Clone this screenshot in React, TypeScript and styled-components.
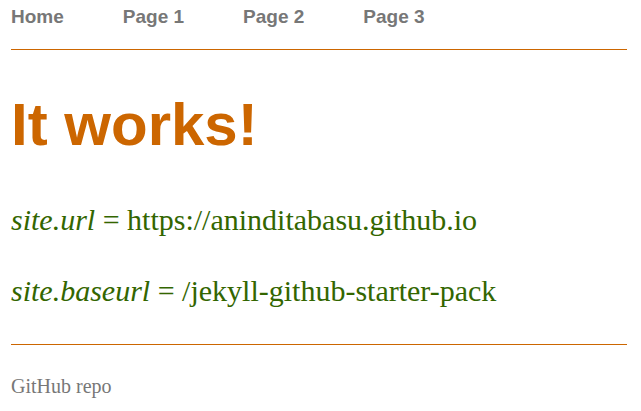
import React from 'react';
import styled, { createGlobalStyle } from 'styled-components';

const GlobalStyle = createGlobalStyle`
  html, body {
    margin: 0;
    padding: 0;
    background: #ffffff;
  }
`;

const Page = styled.div`
  padding: 0 14px 0 11px;
  font-family: 'Liberation Serif', 'Times New Roman', serif;
`;

const Nav = styled.nav`
  display: flex;
  gap: 59px;
  padding-top: 5px;
  height: 44px;
  border-bottom: 1px solid #cc6600;
`;

const NavLink = styled.a`
  font-family: 'Liberation Sans', Arial, sans-serif;
  font-weight: bold;
  font-size: 19px;
  line-height: 24px;
  color: #777777;
  text-decoration: none;
`;

const Title = styled.h1`
  font-family: 'Liberation Sans', Arial, sans-serif;
  font-weight: bold;
  font-size: 60px;
  line-height: 70px;
  color: #cc6600;
  margin: 40px 0 43px 0;
`;

const Line = styled.p`
  font-size: 30px;
  line-height: 34px;
  color: #336600;
  margin: 0 0 37px 0;

  &:last-of-type {
    margin-bottom: 36px;
  }
`;

const Footer = styled.footer`
  border-top: 1px solid #cc6600;
  padding-top: 30px;
  font-size: 20px;
  line-height: 23px;
`;

const RepoLink = styled.a`
  color: #777777;
  text-decoration: none;
`;

export default function App() {
  return (
    <Page>
      <GlobalStyle />
      <Nav>
        <NavLink href="#">Home</NavLink>
        <NavLink href="#">Page 1</NavLink>
        <NavLink href="#">Page 2</NavLink>
        <NavLink href="#">Page 3</NavLink>
      </Nav>
      <Title>It works!</Title>
      <Line><em>site.url</em> = https://aninditabasu.github.io</Line>
      <Line><em>site.baseurl</em> = /jekyll-github-starter-pack</Line>
      <Footer>
        <RepoLink href="#">GitHub repo</RepoLink>
      </Footer>
    </Page>
  );
}
